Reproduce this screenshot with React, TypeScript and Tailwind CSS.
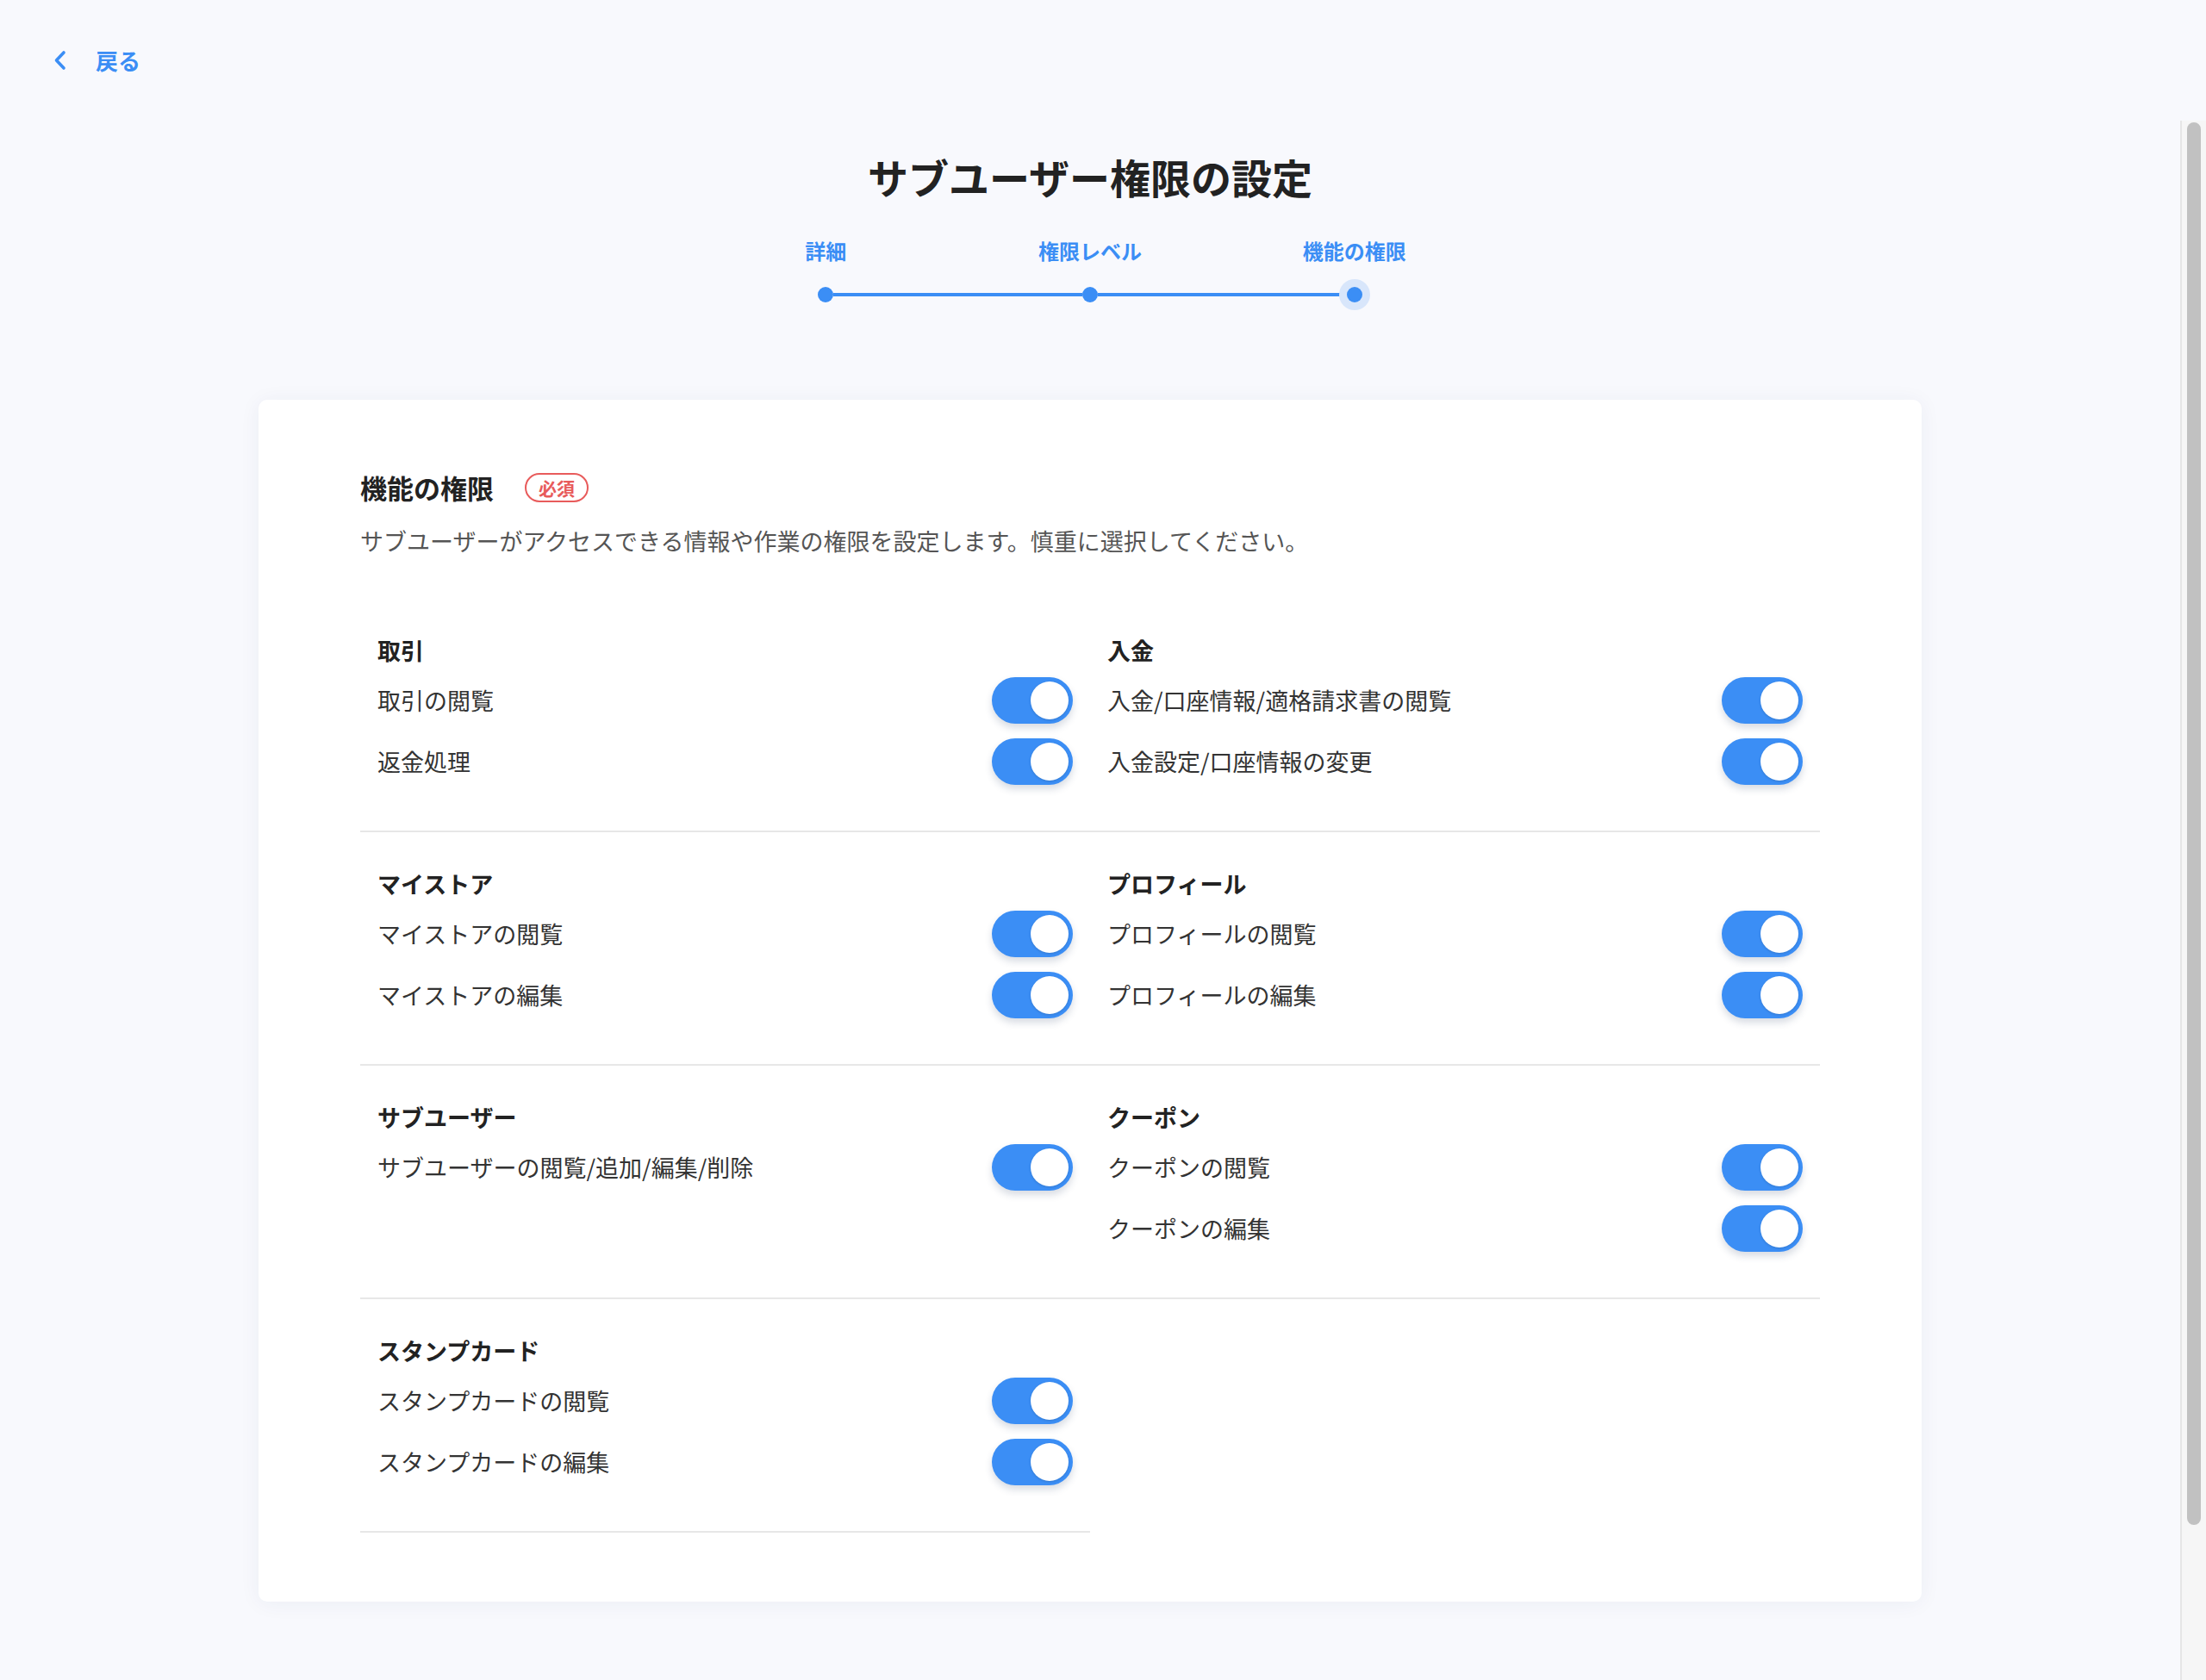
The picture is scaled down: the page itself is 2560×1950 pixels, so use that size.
import React, { useState } from 'react';

const sections = [
  { title: '取引', items: ['取引の閲覧', '返金処理'] },
  { title: '入金', items: ['入金/口座情報/適格請求書の閲覧', '入金設定/口座情報の変更'] },
  { title: 'マイストア', items: ['マイストアの閲覧', 'マイストアの編集'] },
  { title: 'プロフィール', items: ['プロフィールの閲覧', 'プロフィールの編集'] },
  { title: 'サブユーザー', items: ['サブユーザーの閲覧/追加/編集/削除'] },
  { title: 'クーポン', items: ['クーポンの閲覧', 'クーポンの編集'] },
  { title: 'スタンプカード', items: ['スタンプカードの閲覧', 'スタンプカードの編集'] },
];

const steps = ['詳細', '権限レベル', '機能の権限'];

const Toggle = ({ on, onClick }: { on: boolean; onClick: () => void }) => (
  <button
    onClick={onClick}
    className={`w-[94px] h-[54px] rounded-full flex items-center px-[5px] shadow-[0_5px_9px_rgba(40,60,100,0.18)] ${
      on ? 'bg-[#3b8ef5] justify-end' : 'bg-[#d5d8de] justify-start'
    }`}
  >
    <span className="w-[44px] h-[44px] rounded-full bg-white shadow-[0_1px_3px_rgba(0,0,0,0.15)]" />
  </button>
);

const Dot = ({ current }: { current?: boolean }) => (
  <div className={`w-[36px] h-[36px] rounded-full flex items-center justify-center ${current ? 'bg-[#d8e6fb]' : ''}`}>
    <div className="w-[18px] h-[18px] rounded-full bg-[#3b8ef5]" />
  </div>
);

const App = () => {
  const [state, setState] = useState<Record<string, boolean>>({});
  const isOn = (k: string) => state[k] !== false;
  const flip = (k: string) => setState((s) => ({ ...s, [k]: !isOn(k) }));

  return (
    <div className="h-[1950px] flex flex-col bg-[#f8f9fd] font-['Noto_Sans_CJK_JP','Noto_Sans',sans-serif] text-[#222] overflow-hidden">
      <header className="h-[140px] flex items-center pl-[62px] shrink-0">
        <a className="flex items-center gap-[34px] text-[#3b8ef5] cursor-pointer">
          <svg width="15" height="24" viewBox="0 0 15 24" fill="none">
            <path d="M12 3 L3.5 12 L12 21" stroke="#3b8ef5" strokeWidth="3.6" strokeLinecap="round" strokeLinejoin="round" />
          </svg>
          <span className="text-[26px] font-bold leading-[36px]">戻る</span>
        </a>
      </header>

      <div className="flex flex-1 min-h-0">
        <main className="flex-1 flex flex-col items-center pt-[36px]">
          <h1 className="text-[47px] font-bold leading-[58px] text-[#222]">サブユーザー権限の設定</h1>

          <div className="mt-[41px] grid grid-cols-3 w-[920px] text-center">
            {steps.map((s) => (
              <div key={s} className="text-[24px] font-bold leading-[32px] text-[#3b8ef5]">
                {s}
              </div>
            ))}
          </div>
          <div className="mt-[17px] w-[650px] flex items-center">
            <Dot />
            <div className="flex-1 h-[4px] bg-[#3b8ef5] -mx-[9px]" />
            <Dot />
            <div className="flex-1 h-[4px] bg-[#3b8ef5] -mx-[9px]" />
            <Dot current />
          </div>

          <section className="mt-[104px] w-[1930px] bg-white rounded-[10px] shadow-[0_2px_24px_rgba(30,50,100,0.06)] px-[118px] pt-[83px] pb-[80px]">
            <div className="flex items-center gap-[36px]">
              <h2 className="text-[31px] font-bold leading-[38px] text-[#222]">機能の権限</h2>
              <span className="h-[34px] px-[14px] rounded-full border-2 border-[#e85b5b] text-[#e85b5b] text-[21px] font-bold leading-[30px]">
                必須
              </span>
            </div>
            <p className="mt-[25px] text-[27px] leading-[36px] text-[#555]">
              サブユーザーがアクセスできる情報や作業の権限を設定します。慎重に選択してください。
            </p>

            <div className="mt-[49px] grid grid-cols-2">
              {sections.map((sec) => (
                <div key={sec.title} className="px-[20px] pt-[44px] pb-[53px] border-b-2 border-[#e7e7e7]">
                  <h3 className="text-[27px] font-bold leading-[32px] text-[#222]">{sec.title}</h3>
                  <div className="mt-[15px] flex flex-col gap-[17px]">
                    {sec.items.map((it) => (
                      <div key={it} className="h-[54px] flex items-center justify-between">
                        <span className="text-[27px] leading-[36px] text-[#333]">{it}</span>
                        <Toggle on={isOn(it)} onClick={() => flip(it)} />
                      </div>
                    ))}
                  </div>
                </div>
              ))}
            </div>
          </section>
        </main>

        <div className="w-[30px] shrink-0 bg-[#f6f6f6] border-l-2 border-[#e6e6e6] flex justify-center pt-[2px]">
          <div className="w-[16px] h-[1628px] rounded-full bg-[#c1c1c1]" />
        </div>
      </div>
    </div>
  );
};

export default App;
